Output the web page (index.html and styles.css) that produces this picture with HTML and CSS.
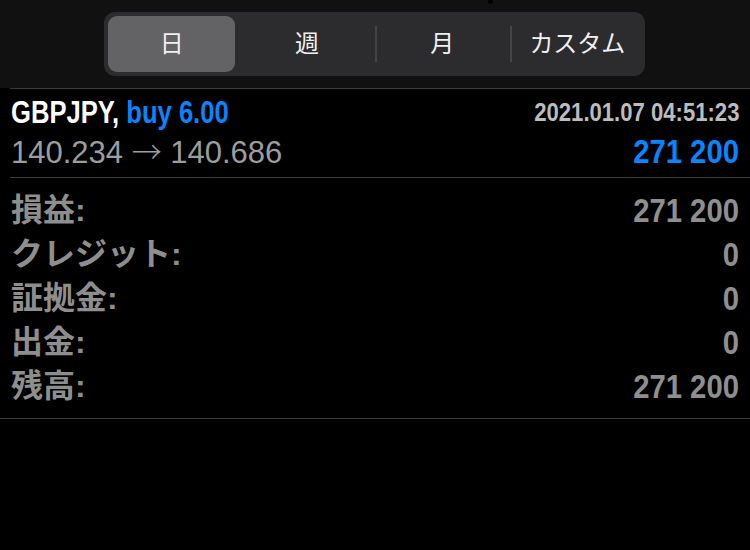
FILE: index.html
```html
<!DOCTYPE html>
<html lang="ja">
<head>
<meta charset="utf-8">
<link rel="stylesheet" href="styles.css">
</head>
<body>
<div class="top">
  <span class="dot"></span>
  <div class="seg">
    <div class="seg-item active"><span class="seg-label">日</span></div>
    <div class="seg-item"><span class="seg-label">週</span></div>
    <div class="seg-item sep"><span class="seg-label">月</span></div>
    <div class="seg-item sep"><span class="seg-label">カスタム</span></div>
  </div>
</div>
<div class="position">
  <div class="inner">
    <div class="head">
      <div class="row1">
        <div class="sym cond-l"><span class="pair">GBPJPY,</span> <span class="side">buy 6.00</span></div>
        <div class="time cond-r">2021.01.07 04:51:23</div>
      </div>
      <div class="row2">
        <div class="prices">140.234 <span class="arrow">→</span> 140.686</div>
        <div class="profit cond-r">271 200</div>
      </div>
    </div>
    <div class="details">
      <div class="drow"><span class="lbl">損益<span class="colon">:</span></span><span class="val cond-r">271 200</span></div>
      <div class="drow"><span class="lbl">クレジット<span class="colon">:</span></span><span class="val cond-r">0</span></div>
      <div class="drow"><span class="lbl">証拠金<span class="colon">:</span></span><span class="val cond-r">0</span></div>
      <div class="drow"><span class="lbl">出金<span class="colon">:</span></span><span class="val cond-r">0</span></div>
      <div class="drow"><span class="lbl">残高<span class="colon">:</span></span><span class="val cond-r">271 200</span></div>
    </div>
  </div>
</div>
</body>
</html>
```
FILE: styles.css
```css
html, body {
  margin: 0;
  padding: 0;
  background: #000;
}
body {
  width: 750px;
  height: 550px;
  overflow: hidden;
  font-family: "Liberation Sans", "Noto Sans CJK JP", sans-serif;
}
.top {
  position: relative;
  height: 88px;
  background: #111111;
  padding-top: 12px;
  box-sizing: border-box;
}
.dot {
  position: absolute;
  left: 488px;
  top: -1px;
  width: 5px;
  height: 5px;
  border-radius: 50%;
  background: #000;
}
.seg {
  margin-left: 104px;
  width: 541px;
  height: 64px;
  border-radius: 11px;
  background: #2c2c2e;
  display: flex;
}
.seg-item {
  flex: 1;
  padding: 4px;
  position: relative;
  display: flex;
}
.seg-item.sep::before {
  content: "";
  position: absolute;
  left: 0;
  top: 14px;
  bottom: 14px;
  width: 2px;
  background: #444446;
}
.seg-label {
  flex: 1;
  display: flex;
  align-items: center;
  justify-content: center;
  padding-bottom: 6px;
  border-radius: 9px;
  font-family: "Noto Sans CJK JP", sans-serif;
  font-size: 24px;
  color: #f0f0f0;
}
.seg-item.active .seg-label {
  background: #636366;
}
.position {
  border-bottom: 1px solid #3a3a3c;
}
.inner {
  margin-left: 10px;
  border-top: 1px solid #3a3a3c;
}
.head {
  padding: 0 11px 10px 1px;
}
.row1, .row2 {
  display: flex;
  justify-content: space-between;
  align-items: center;
}
.row1 {
  height: 46px;
}
.row2 {
  height: 32px;
}
.cond-l {
  transform-origin: left center;
}
.cond-r {
  display: inline-block;
  transform-origin: right center;
  transform: scaleX(0.86);
}
.sym {
  font-weight: 700;
  font-size: 32px;
  line-height: 46px;
  white-space: nowrap;
  transform: scaleX(0.8);
}
.pair {
  color: #ffffff;
}
.side {
  color: #0a84ff;
}
.time {
  font-weight: 700;
  font-size: 26px;
  color: #bcbcbc;
  transform: scaleX(0.85);
}
.prices {
  font-size: 31px;
  color: #9d9d9d;
  line-height: 32px;
  white-space: nowrap;
}
.arrow {
  font-family: "Noto Sans CJK JP", sans-serif;
  font-weight: 300;
  font-size: 30px;
}
.profit {
  font-weight: 700;
  font-size: 34px;
  color: #0a84ff;
  line-height: 32px;
}
.details {
  border-top: 1px solid #3a3a3c;
  padding: 10px 11px 10px 1px;
}
.drow {
  display: flex;
  justify-content: space-between;
  align-items: center;
  height: 44px;
}
.lbl {
  font-family: "Noto Sans CJK JP", sans-serif;
  font-weight: 700;
  font-size: 32px;
  color: #8e8e8e;
  line-height: 44px;
  padding-bottom: 3px;
}
.colon {
  font-family: "Liberation Sans", sans-serif;
}
.val {
  font-weight: 700;
  font-size: 34px;
  color: #8f8f8f;
  line-height: 44px;
}
```
